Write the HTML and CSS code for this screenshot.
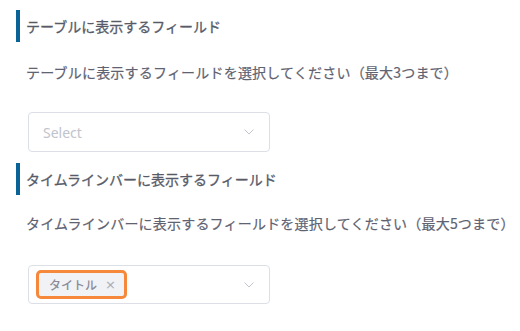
FILE: index.html
```html
<!DOCTYPE html>
<html lang="ja">
<head>
<meta charset="utf-8">
<link rel="stylesheet" href="styles.css">
</head>
<body>
<section class="field">
  <h3 class="field-title">テーブルに表示するフィールド</h3>
  <p class="field-desc">テーブルに表示するフィールドを選択してください（最大3つまで）</p>
  <div class="select">
    <span class="placeholder">Select</span>
    <svg class="chevron" width="10" height="6" viewBox="0 0 10 6"><path d="M0.5 0.5 L5 5 L9.5 0.5" fill="none" stroke="#c0c4cc" stroke-width="1"/></svg>
  </div>
</section>
<section class="field second">
  <h3 class="field-title">タイムラインバーに表示するフィールド</h3>
  <p class="field-desc">タイムラインバーに表示するフィールドを選択してください（最大5つまで）</p>
  <div class="select multi">
    <span class="tag">タイトル<span class="tag-close">×</span></span>
    <svg class="chevron" width="10" height="6" viewBox="0 0 10 6"><path d="M0.5 0.5 L5 5 L9.5 0.5" fill="none" stroke="#c0c4cc" stroke-width="1"/></svg>
  </div>
</section>
</body>
</html>
```
FILE: styles.css
```css
html, body {
  margin: 0;
  padding: 0;
  background: #ffffff;
}
body {
  font-family: "Noto Sans CJK JP", "Noto Sans", sans-serif;
  color: #5f6270;
  width: 520px;
  height: 331px;
  overflow: hidden;
}
.field {
  padding-left: 16px;
  padding-top: 10px;
}
.field.second {
  padding-top: 11px;
}
.field-title {
  margin: 0;
  border-left: 4px solid #0a6396;
  padding-left: 6px;
  height: 32px;
  line-height: 32px;
  font-size: 14px;
  font-weight: 400;
  color: #575b69;
  -webkit-text-stroke: 0.3px #575b69;
}
.field-desc {
  margin: 20px 0 0 10px;
  line-height: 20px;
  font-size: 14px;
  letter-spacing: 0.2px;
  color: #5f6270;
  -webkit-text-stroke: 0.2px #5f6270;
}
.select {
  margin: 30px 0 0 12px;
  width: 242px;
  height: 40px;
  box-sizing: border-box;
  border: 1px solid #dcdfe6;
  border-radius: 4px;
  display: flex;
  align-items: center;
  padding: 0 15px 0 14px;
}
.second .field-desc {
  margin-top: 18px;
}
.second .select {
  margin-top: 32px;
  height: 39px;
  padding-left: 10px;
}
.placeholder {
  font-family: "Noto Sans", "Open Sans", sans-serif;
  font-size: 14px;
  color: #c0c4cc;
  flex: 1;
}
.chevron {
  display: block;
  margin-left: auto;
}
.tag {
  display: flex;
  align-items: center;
  height: 23px;
  padding: 0 8px 0 10px;
  background: #f0f2f5;
  border-radius: 2px;
  outline: 3px solid #f5883a;
  font-size: 12px;
  color: #8c8b96;
  font-weight: 500;
}
.tag-close {
  margin-left: 8px;
  font-size: 13px;
  color: #a8abb2;
  font-family: "DejaVu Sans", sans-serif;
  font-weight: 400;
}
```
